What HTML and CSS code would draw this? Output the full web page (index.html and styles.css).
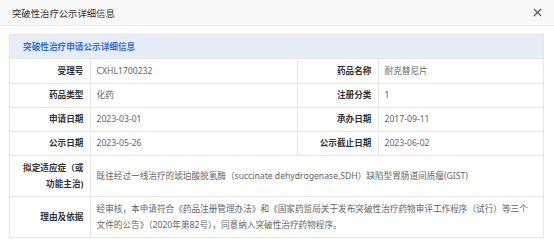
FILE: index.html
```html
<!DOCTYPE html>
<html lang="zh-CN">
<head>
<meta charset="utf-8">
<title>突破性治疗公示详细信息</title>
<link rel="stylesheet" href="styles.css">
</head>
<body>
<div class="dialog">
  <div class="dialog-header">
    <span class="dialog-title">突破性治疗公示详细信息</span>
    <span class="dialog-close">
      <svg width="9" height="9" viewBox="0 0 9 9"><path d="M1 1L8 8M8 1L1 8" stroke="#555" stroke-width="1.1" fill="none"/></svg>
    </span>
  </div>
  <div class="panel">
    <div class="panel-title">突破性治疗申请公示详细信息</div>
    <table class="info">
      <colgroup>
        <col class="c-label1"><col class="c-val1"><col class="c-label2"><col class="c-val2">
      </colgroup>
      <tr>
        <th>受理号</th><td>CXHL1700232</td>
        <th>药品名称</th><td>耐克替尼片</td>
      </tr>
      <tr>
        <th>药品类型</th><td>化药</td>
        <th>注册分类</th><td>1</td>
      </tr>
      <tr>
        <th>申请日期</th><td>2023-03-01</td>
        <th>承办日期</th><td>2017-09-11</td>
      </tr>
      <tr>
        <th>公示日期</th><td>2023-05-26</td>
        <th>公示截止日期</th><td>2023-06-02</td>
      </tr>
      <tr class="tall">
        <th>拟定适应症（或功能主治)</th>
        <td colspan="3" class="wide">既往经过一线治疗的琥珀酸脱氢酶（succinate dehydrogenase,SDH）缺陷型胃肠道间质瘤(GIST)</td>
      </tr>
      <tr class="tall">
        <th>理由及依据</th>
        <td colspan="3" class="wide">经审核，本申请符合《药品注册管理办法》和《国家药监局关于发布突破性治疗药物审评工作程序（试行）等三个文件的公告》（2020年第82号），同意纳入突破性治疗药物程序。</td>
      </tr>
    </table>
  </div>
</div>
</body>
</html>
```

FILE: styles.css
```css
html, body {
  margin: 0;
  padding: 0;
  background: #fff;
}
body {
  font-family: "Noto Sans", "Noto Sans CJK SC", sans-serif;
  font-size: 8.64px;
  color: #333;
}
.dialog {
  width: 554px;
}
.dialog-header {
  height: 26px;
  box-sizing: border-box;
  background: #f8f8f8;
  border-bottom: 1px solid #eeeeee;
  display: flex;
  align-items: center;
  justify-content: space-between;
  padding: 0 12px 0 12px;
}
.dialog-title {
  font-size: 9.36px;
  color: #333;
}
.dialog-close {
  display: flex;
  align-items: center;
}
.panel {
  margin: 8px 0 0 9px;
  width: 535px;
  box-sizing: border-box;
  border: 1px solid #e6e6e6;
}
.panel-title {
  height: 23px;
  background: #e6edf8;
  color: #2f6fd0;
  font-weight: bold;
  display: flex;
  align-items: center;
  padding-left: 13px;
  border-bottom: 1px solid #e6e6e6;
}
.info {
  width: 100%;
  border-collapse: collapse;
  table-layout: fixed;
}
.c-label1 { width: 80px; }
.c-val1 { width: 207px; }
.c-label2 { width: 81px; }
.c-val2 { width: auto; }
.info th, .info td {
  height: 24px;
  box-sizing: border-box;
  border: 1px solid #e6e6e6;
  padding: 0 6px;
  line-height: 16px;
}
.info tr:first-child th, .info tr:first-child td { border-top: none; }
.info tr th:first-child { border-left: none; }
.info tr td:last-child { border-right: none; }
.info tr:last-child th, .info tr:last-child td { border-bottom: none; }
.info th {
  text-align: right;
  font-weight: bold;
  color: #333;
}
.info td {
  text-align: left;
  font-weight: normal;
  color: #666;
}
.info td.wide {
  padding-right: 15px;
}
.info tr.tall th, .info tr.tall td {
  height: 41px;
}
```
